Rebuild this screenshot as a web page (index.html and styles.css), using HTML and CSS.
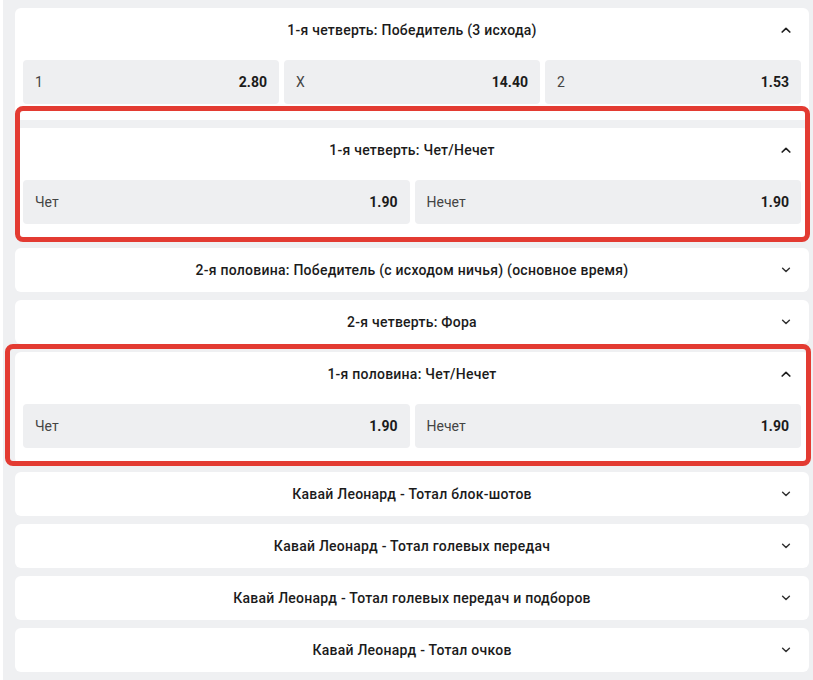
FILE: index.html
```html
<!DOCTYPE html>
<html lang="ru">
<head>
<meta charset="utf-8">
<title>Рынки</title>
<link rel="stylesheet" href="styles.css">
</head>
<body>
<div class="page">
  <section class="market">
    <div class="market-head">
      <span class="title">1-я четверть: Победитель (3 исхода)</span>
      <svg class="chev" viewBox="0 0 10 6" width="10" height="6"><path d="M1.2 5 L5 1.3 L8.8 5" /></svg>
    </div>
    <div class="odds cols3">
      <div class="odd"><span class="lbl">1</span><span class="val">2.80</span></div>
      <div class="odd"><span class="lbl">X</span><span class="val">14.40</span></div>
      <div class="odd"><span class="lbl">2</span><span class="val">1.53</span></div>
    </div>
  </section>

  <section class="market marked mark-a">
    <div class="market-head">
      <span class="title">1-я четверть: Чет/Нечет</span>
      <svg class="chev" viewBox="0 0 10 6" width="10" height="6"><path d="M1.2 5 L5 1.3 L8.8 5" /></svg>
    </div>
    <div class="odds cols2">
      <div class="odd"><span class="lbl">Чет</span><span class="val">1.90</span></div>
      <div class="odd"><span class="lbl">Нечет</span><span class="val">1.90</span></div>
    </div>
  </section>

  <section class="market closed">
    <div class="market-head">
      <span class="title">2-я половина: Победитель (с исходом ничья) (основное время)</span>
      <svg class="chev down" viewBox="0 0 10 6" width="10" height="6"><path d="M1.6 1.3 L5 4.5 L8.4 1.3" /></svg>
    </div>
  </section>

  <section class="market closed">
    <div class="market-head">
      <span class="title">2-я четверть: Фора</span>
      <svg class="chev down" viewBox="0 0 10 6" width="10" height="6"><path d="M1.6 1.3 L5 4.5 L8.4 1.3" /></svg>
    </div>
  </section>

  <section class="market marked mark-b">
    <div class="market-head">
      <span class="title">1-я половина: Чет/Нечет</span>
      <svg class="chev" viewBox="0 0 10 6" width="10" height="6"><path d="M1.2 5 L5 1.3 L8.8 5" /></svg>
    </div>
    <div class="odds cols2">
      <div class="odd"><span class="lbl">Чет</span><span class="val">1.90</span></div>
      <div class="odd"><span class="lbl">Нечет</span><span class="val">1.90</span></div>
    </div>
  </section>

  <section class="market closed">
    <div class="market-head">
      <span class="title">Кавай Леонард - Тотал блок-шотов</span>
      <svg class="chev down" viewBox="0 0 10 6" width="10" height="6"><path d="M1.6 1.3 L5 4.5 L8.4 1.3" /></svg>
    </div>
  </section>

  <section class="market closed">
    <div class="market-head">
      <span class="title">Кавай Леонард - Тотал голевых передач</span>
      <svg class="chev down" viewBox="0 0 10 6" width="10" height="6"><path d="M1.6 1.3 L5 4.5 L8.4 1.3" /></svg>
    </div>
  </section>

  <section class="market closed">
    <div class="market-head">
      <span class="title">Кавай Леонард - Тотал голевых передач и подборов</span>
      <svg class="chev down" viewBox="0 0 10 6" width="10" height="6"><path d="M1.6 1.3 L5 4.5 L8.4 1.3" /></svg>
    </div>
  </section>

  <section class="market closed">
    <div class="market-head">
      <span class="title">Кавай Леонард - Тотал очков</span>
      <svg class="chev down" viewBox="0 0 10 6" width="10" height="6"><path d="M1.6 1.3 L5 4.5 L8.4 1.3" /></svg>
    </div>
  </section>
</div>
</body>
</html>
```
FILE: styles.css
```css
* { box-sizing: border-box; }

html, body {
  margin: 0;
  padding: 0;
  background: #ffffff;
}

body {
  font-family: Roboto, "Noto Sans", "Liberation Sans", sans-serif;
  font-size: 14px;
  color: #1b1b1b;
}

.page {
  margin-left: 3px;
  min-height: 680px;
  background: #eff0f2;
  padding: 8px 4px 8px 12px;
  display: flex;
  flex-direction: column;
  gap: 8px;
}

.market {
  position: relative;
  background: #ffffff;
  border-radius: 6px;
}

.market-head {
  height: 44px;
  display: grid;
  grid-template-columns: 44px 1fr 44px;
  align-items: center;
}

.title {
  grid-column: 2;
  text-align: center;
  font-weight: 500;
  font-size: 14px;
  letter-spacing: 0.25px;
  color: #1b1b1b;
  white-space: nowrap;
}

.chev {
  grid-column: 3;
  justify-self: center;
  margin-left: -2px;
}

.chev path {
  fill: none;
  stroke: #1f1f1f;
  stroke-width: 1.7;
  stroke-linecap: round;
  stroke-linejoin: round;
}

.chev.down path {
  stroke: #333333;
  stroke-width: 1.5;
}

.odds {
  display: grid;
  gap: 5px;
  padding: 8px 8px 16px;
}

.cols3 { grid-template-columns: repeat(3, 1fr); }
.cols2 { grid-template-columns: repeat(2, 1fr); }

.odd {
  height: 44px;
  background: #eeeff1;
  border-radius: 4px;
  display: flex;
  align-items: center;
  justify-content: space-between;
  padding: 0 12px;
}

.lbl {
  color: #444444;
  font-size: 14px;
}

.val {
  color: #1b1b1b;
  font-weight: 700;
  font-size: 14px;
}

.marked::after {
  content: "";
  position: absolute;
  border: 5px solid #e33b32;
  border-radius: 8px;
  pointer-events: none;
}

.mark-a::after {
  top: -22px;
  bottom: -2px;
  left: 0;
  right: -1px;
}

.mark-b::after {
  top: -8px;
  bottom: -2px;
  left: -10px;
  right: -2px;
}
```
